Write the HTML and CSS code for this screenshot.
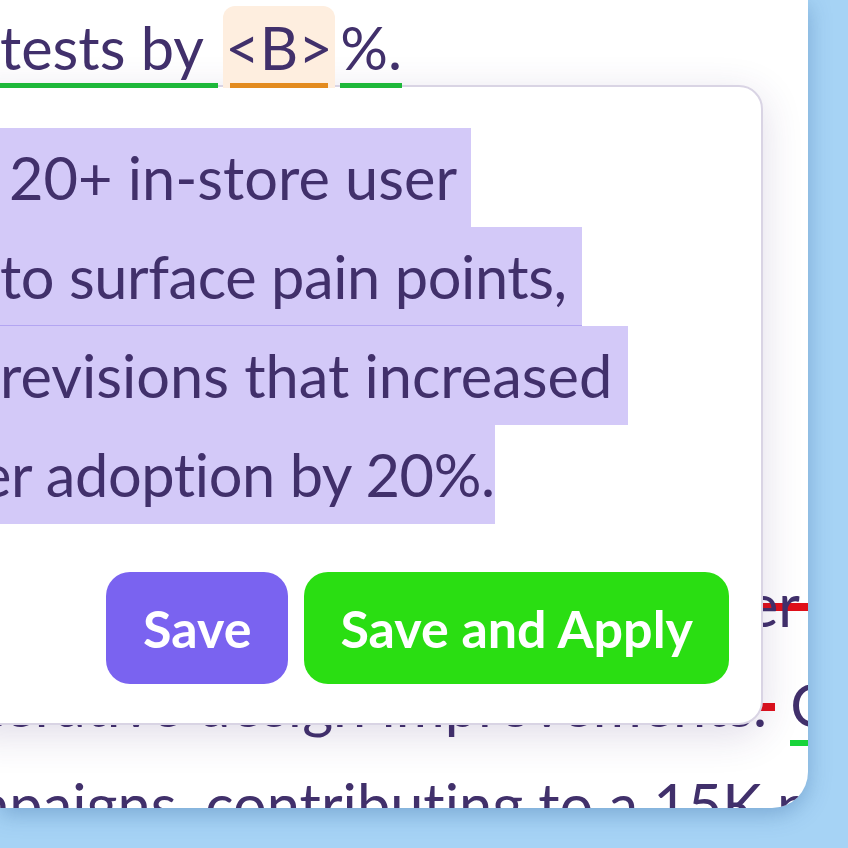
FILE: index.html
```html
<!DOCTYPE html>
<html lang="en">
<head>
<meta charset="utf-8">
<title>Suggestion editor</title>
<link rel="stylesheet" href="styles.css">
</head>
<body>
<div class="card">
  <div class="doc">
    <div class="line first"><span class="ins">tests by </span><span class="chip"><span class="chip-text">&lt;B&gt;</span></span><span class="ins">%.</span></div>
    <div class="gap"></div>
    <div class="line end l-er"><span class="inner">Partnered with engineers to redesign the checkout flow for the retail <span class="del">user</span></span></div>
    <div class="line end l-imp"><span class="inner">Synthesized findings into actionable insights that guided iterative design <span class="del">improvements.</span> <span class="ins2">C</span></span></div>
    <div class="line end l-camp"><span class="inner">Supported seasonal marketing campaigns, contributing to a 15K pr</span></div>
  </div>

  <div class="popup">
    <div class="text">
      <div class="hl lead">20+ in-store user&nbsp;</div>
      <div class="hl rule tight">to surface pain points,&nbsp;</div>
      <div class="hl">revisions that increased&nbsp;</div>
      <div class="hl shift tight">er adoption by 20%.</div>
    </div>
    <div class="actions">
      <button class="btn save">Save</button>
      <button class="btn apply">Save and Apply</button>
    </div>
  </div>
</div>
</body>
</html>
```

FILE: styles.css
```css
html, body {
  margin: 0;
  padding: 0;
}
body {
  width: 848px;
  height: 848px;
  overflow: hidden;
  background: #a6d3f5;
  font-family: "Lato", "Noto Sans", sans-serif;
  font-variant-ligatures: none;
}
.card {
  position: relative;
  width: 808px;
  height: 808px;
  background: #ffffff;
  border-bottom-right-radius: 36px;
  box-shadow: 0 6px 22px rgba(40, 90, 150, 0.35);
  overflow: hidden;
  color: #41306b;
  font-size: 59.5px;
  line-height: 100px;
}
.doc {
  display: flex;
  flex-direction: column;
}
.line {
  white-space: nowrap;
  height: 100px;
}
.line.first {
  position: relative;
  z-index: 2;
  margin-top: -3px;
}
.gap {
  height: 457px;
}
.line.end {
  display: flex;
  justify-content: flex-end;
}
.inner {
  flex: none;
}
.ins {
  padding-bottom: 5px;
  background: linear-gradient(#1eb83a, #1eb83a) no-repeat left bottom / 100% 5px;
}
.chip {
  padding: 5px 2.5px 5px;
  margin: 0 5px;
  border-radius: 12px 12px 0 0;
  background:
    linear-gradient(#e38b1f, #e38b1f) no-repeat 7px bottom / calc(100% - 14px) 5px,
    #feeedf;
}
.del {
  padding-right: 8px;
  background: linear-gradient(#e0101a, #e0101a) no-repeat 0 35px / 100% 8px;
}
.ins2 {
  padding-bottom: 6px;
  background: linear-gradient(#18d43a, #18d43a) no-repeat left bottom / 100% 6px;
}
.l-imp .inner {
  margin-right: -22px;
}
.l-camp .inner {
  margin-right: -24px;
}
.popup {
  position: absolute;
  top: 85px;
  left: -40px;
  right: 45px;
  z-index: 1;
  box-sizing: border-box;
  padding: 41px 32px 39px 38px;
  background: #ffffff;
  border: 2px solid #d9d4e4;
  border-radius: 24px;
  box-shadow: 0 10px 40px rgba(60, 40, 110, 0.16);
}
.text {
  display: flex;
  flex-direction: column;
  align-items: flex-start;
  white-space: nowrap;
  overflow: hidden;
}
.hl {
  background: #d3c9f8;
  line-height: 99px;
}
.hl.lead {
  padding-left: 9px;
}
.hl.tight {
  letter-spacing: -0.4px;
}
.hl.shift {
  margin-left: -20px;
}
.hl.rule {
  box-shadow: inset 0 -1px 0 #b3a5f2;
}
.actions {
  display: flex;
  justify-content: flex-end;
  gap: 16px;
  margin-top: 48px;
}
.btn {
  height: 112px;
  padding: 0 37px;
  border: none;
  border-radius: 24px;
  font-family: "Lato", "Noto Sans", sans-serif;
  font-variant-ligatures: none;
  font-weight: 700;
  font-size: 52px;
  color: #ffffff;
  line-height: 1;
}
.btn.save {
  background: #7a63f0;
}
.btn.apply {
  padding: 0 36px;
  background: #2ade12;
}
```
